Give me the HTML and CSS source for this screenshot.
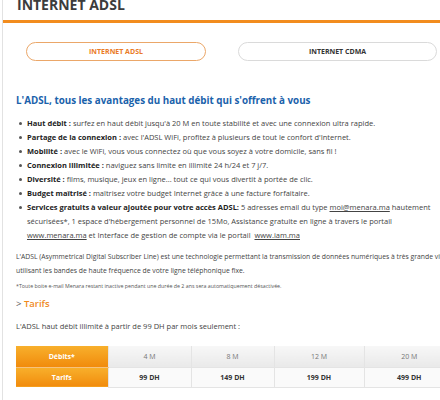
FILE: index.html
```html
<!DOCTYPE html>
<html lang="fr">
<head>
  <meta charset="UTF-8">
  <title>Internet ADSL</title>
  <link rel="stylesheet" href="styles.css">
</head>
<body>
  <div class="page">
    <h1 class="page-title">INTERNET ADSL</h1>

    <div class="tabs">
      <a class="tab tab-active">INTERNET ADSL</a>
      <a class="tab">INTERNET CDMA</a>
    </div>

    <div class="content">
      <h2 class="lead">L'ADSL, tous les avantages du haut débit qui s'offrent à vous</h2>

      <ul class="perks">
        <li><b>Haut débit :</b> surfez en haut débit jusqu'à 20 M en toute stabilité et avec une connexion ultra rapide.</li>
        <li><b>Partage de la connexion :</b> avec l'ADSL WiFi, profitez à plusieurs de tout le confort d'Internet.</li>
        <li><b>Mobilité :</b> avec le WiFi, vous vous connectez où que vous soyez à votre domicile, sans fil !</li>
        <li><b>Connexion illimitée :</b> naviguez sans limite en illimité 24 h/24 et 7 j/7.</li>
        <li><b>Diversité :</b> films, musique, jeux en ligne... tout ce qui vous divertit à portée de clic.</li>
        <li><b>Budget maîtrisé :</b> maîtrisez votre budget Internet grâce à une facture forfaitaire.</li>
        <li><b>Services gratuits à valeur ajoutée pour votre accès ADSL:</b> 5 adresses email du type <u>moi@menara.ma</u> hautement<br>sécurisées*, 1 espace d'hébergement personnel de 15Mo, Assistance gratuite en ligne à travers le portail<br><u>www.menara.ma</u> et Interface de gestion de compte via le portail&nbsp; <u>www.iam.ma</u></li>
      </ul>

      <p class="intro">L'ADSL (Asymmetrical Digital Subscriber Line) est une technologie permettant la transmission de données numériques à très grande vitesse<br>utilisant les bandes de haute fréquence de votre ligne téléphonique fixe.</p>

      <p class="note">*Toute boite e-mail Menara restant inactive pendant une durée de 2 ans sera automatiquement désactivée.</p>

      <h3 class="section"><span class="chevron">&gt;</span> Tarifs</h3>

      <p class="offer">L'ADSL haut débit illimité à partir de 99 DH par mois seulement :</p>

      <table class="rates">
        <tr class="row-speed">
          <th>Débits*</th>
          <td>4 M</td>
          <td>8 M</td>
          <td>12 M</td>
          <td>20 M</td>
        </tr>
        <tr class="row-price">
          <th>Tarifs</th>
          <td>99 DH</td>
          <td>149 DH</td>
          <td>199 DH</td>
          <td>499 DH</td>
        </tr>
      </table>
    </div>
  </div>
</body>
</html>
```

FILE: styles.css
```css
/* Reset */
* { box-sizing: border-box; margin: 0; padding: 0; }
html, body {
  background: #fff;
  font-family: "Open Sans", "DejaVu Sans", sans-serif;
  color: #333;
  overflow: hidden;
}

/* Main panel, with its thin grey left edge */
.page {
  width: 480px;
  margin-left: 2px;
  border-left: 1px solid #e2e2e2;
  min-height: 420px;
}

/* Top title, cut by the top of the window */
.page-title {
  margin-top: -5px;
  padding: 0 0 5px 14px;
  font-size: 14px;
  line-height: 20px;
  font-weight: bold;
  color: #3c3c3c;
  border-bottom: 3px solid #f28c1e;
}

/* Pill tabs */
.tabs {
  display: flex;
  gap: 32px;
  padding: 19px 0 0 23px;
}
.tab {
  display: flex;
  justify-content: center;
  align-items: center;
  height: 19px;
  font-size: 7px;
  font-weight: bold;
  color: #333;
  border: 1.5px solid #dadada;
  border-radius: 10px;
}
.tab-active {
  width: 180px;
  color: #ea7a26;
  border-color: #eba769;
}
.tab + .tab { width: 199px; }

/* Body copy */
.content {
  padding: 31px 0 0 13px;
}
.lead {
  font-size: 9.8px;
  line-height: 18px;
  font-weight: bold;
  color: #1a62ab;
  margin-bottom: 6px;
}
.perks {
  list-style: none;
  font-size: 7.5px;
  line-height: 14px;
  color: #444;
}
.perks li {
  position: relative;
  padding-left: 11px;
}
.perks li::before {
  content: "";
  position: absolute;
  left: 3px;
  top: 6px;
  width: 3px;
  height: 3px;
  border-radius: 50%;
  background: #555;
}
.perks b { color: #222; }
.perks u { color: #444; }

.intro {
  margin-top: 8px;
  font-size: 6.8px;
  line-height: 14px;
  color: #444;
  white-space: nowrap;
}
.note {
  margin-top: 3px;
  font-size: 5.3px;
  line-height: 10px;
  color: #555;
  white-space: nowrap;
}
.section {
  margin-top: 5px;
  font-size: 9.5px;
  line-height: 16px;
  font-weight: 600;
  color: #ef8a1d;
}
.chevron {
  font-weight: normal;
  color: #555;
}
.offer {
  margin-top: 8px;
  font-size: 7.5px;
  line-height: 12px;
  color: #444;
}

/* Tariff table */
.rates {
  margin-top: 14px;
  border-collapse: collapse;
  font-size: 7px;
  text-align: center;
}
.rates th {
  width: 92px;
  color: #fff;
  font-weight: bold;
  background: linear-gradient(#f8b02c, #f18b0c);
}
.rates td {
  width: 83px;
  border-left: 1px solid #e4e4e4;
  border-bottom: 1px solid #e4e4e4;
}
.rates td:nth-child(4),
.rates td:nth-child(5) { width: 90px; }
.row-speed th, .row-speed td { height: 21px; }
.row-price th, .row-price td { height: 20px; }
.row-speed td {
  color: #777;
  background: linear-gradient(#f7f7f7, #e9e9e9);
}
.row-price td {
  font-weight: bold;
  color: #333;
  background: #fafafa;
}
.row-speed th { border-bottom: 1px solid #f6c27c; }
```
